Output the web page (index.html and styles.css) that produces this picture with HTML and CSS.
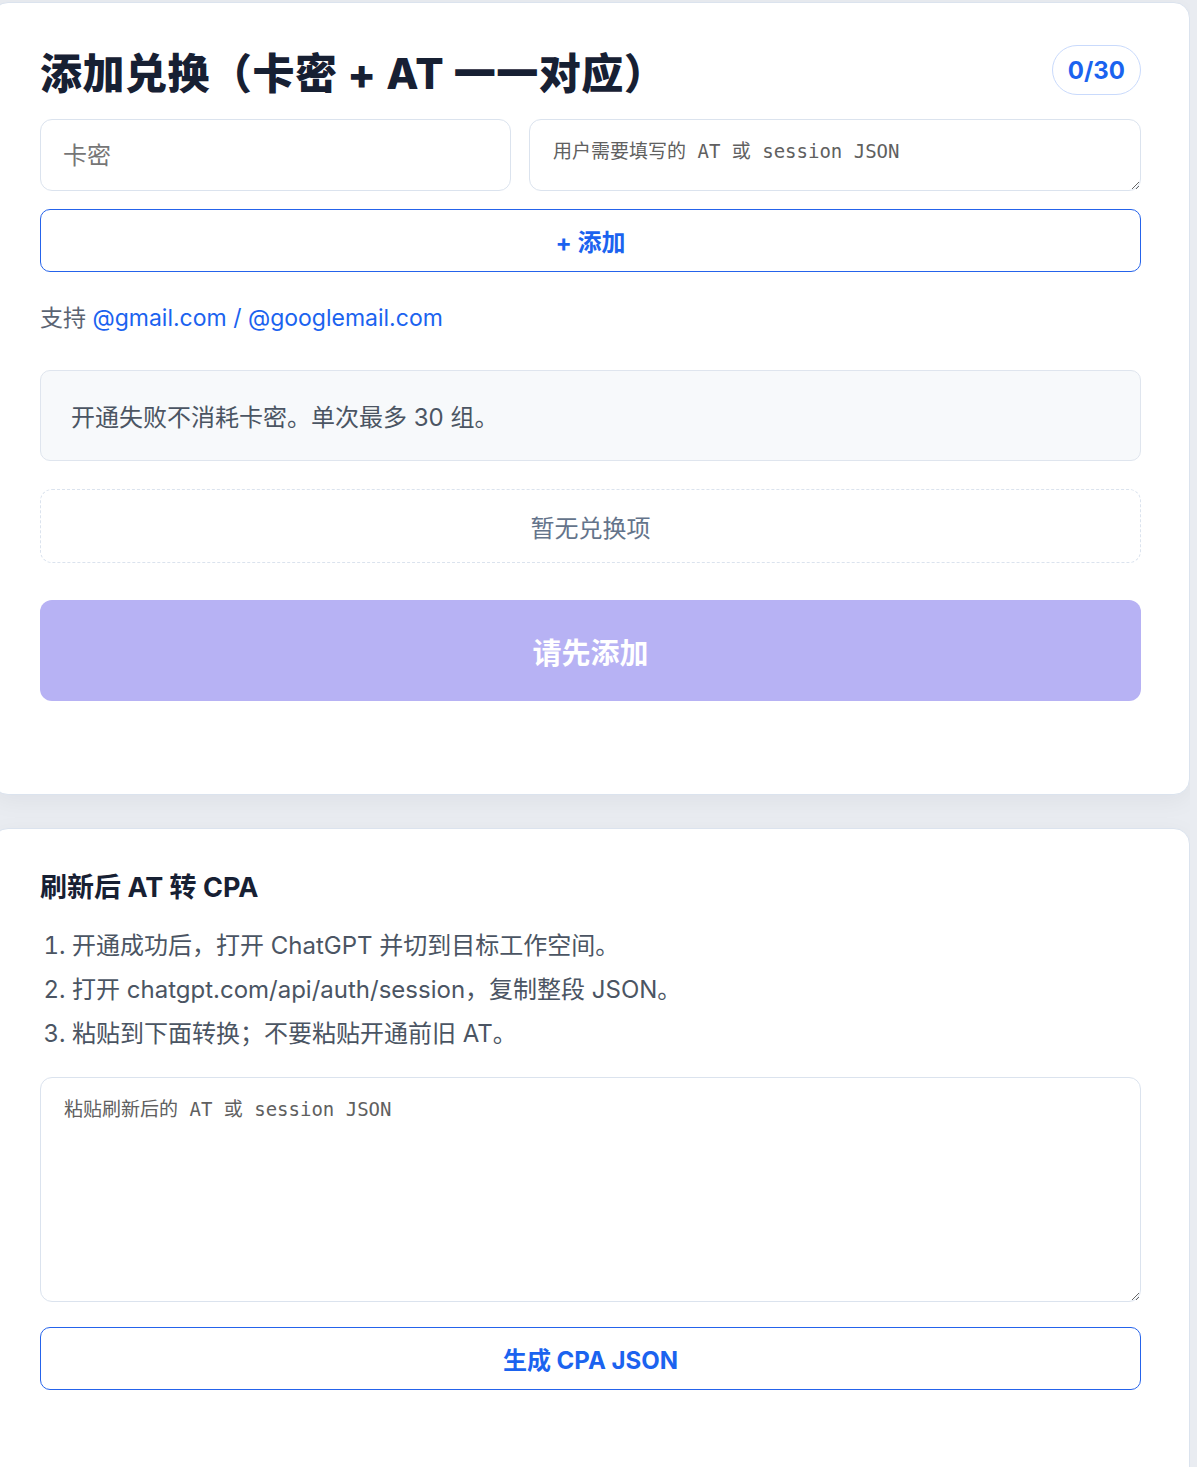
FILE: index.html
```html
<!DOCTYPE html>
<html lang="zh-CN">
<head>
    <meta charset="UTF-8">
    <title>添加兑换</title>
    <link rel="stylesheet" href="styles.css">
</head>
<body>
    <div class="page">
        <section class="card redeem-card">
            <div class="card-head">
                <h1>添加兑换（卡密 + AT 一一对应）</h1>
                <span class="count">0/30</span>
            </div>

            <div class="pair-row">
                <input class="field code-field" type="text" placeholder="卡密">
                <textarea class="field at-field" placeholder="用户需要填写的 AT 或 session JSON"></textarea>
            </div>

            <button class="btn-outline add-btn">+ 添加</button>

            <p class="support">支持 <span class="domain">@gmail.com / @googlemail.com</span></p>

            <div class="notice">开通失败不消耗卡密。单次最多 30 组。</div>

            <div class="empty">暂无兑换项</div>

            <button class="btn-submit" disabled>请先添加</button>
        </section>

        <section class="card cpa-card">
            <h3>刷新后 AT 转 CPA</h3>
            <ol class="steps">
                <li>开通成功后，打开 ChatGPT 并切到目标工作空间。</li>
                <li>打开 chatgpt.com/api/auth/session，复制整段 JSON。</li>
                <li>粘贴到下面转换；不要粘贴开通前旧 AT。</li>
            </ol>
            <textarea class="field session-field" placeholder="粘贴刷新后的 AT 或 session JSON"></textarea>
            <button class="btn-outline cpa-btn">生成 CPA JSON</button>
        </section>
    </div>
</body>
</html>
```

FILE: styles.css
```css
body {
    margin: 0;
    background-color: #e9ecf1;
    font-family: Inter, "Noto Sans CJK SC", sans-serif;
    color: #1e293b;
}
.page {
    width: 1198px;
    margin-left: -8px;
    padding-top: 2px;
    overflow: hidden;
}
.card {
    background: #fff;
    border: 1px solid #dbe3ee;
    border-radius: 16px;
    padding: 0 48px 0 47px;
    box-shadow: 0 6px 24px rgba(15, 23, 42, 0.05);
}
.redeem-card {
    padding-top: 42px;
    padding-bottom: 93px;
}
.card-head {
    display: flex;
    align-items: center;
    justify-content: space-between;
    height: 50px;
}
h1 {
    margin: 0;
    font-size: 42px;
    font-weight: 800;
    letter-spacing: 0.5px;
    color: #172033;
}
.count {
    display: flex;
    align-items: center;
    height: 48px;
    padding: 0 15px;
    border: 1px solid #c9dafc;
    border-radius: 25px;
    color: #1b63ef;
    font-size: 24px;
    font-weight: 700;
}
.pair-row {
    display: flex;
    gap: 18px;
    margin-top: 24px;
}
.field {
    box-sizing: border-box;
    border: 1px solid #dbe3ee;
    border-radius: 12px;
    background: #fff;
    outline: none;
}
.code-field {
    width: 471px;
    height: 72px;
    padding: 0 22px;
    font-family: Inter, "Noto Sans CJK SC", sans-serif;
    font-size: 24px;
}
.code-field::placeholder {
    color: #767676;
}
.at-field,
.session-field {
    font-family: "DejaVu Sans Mono", "Noto Sans CJK SC", monospace;
    font-size: 19px;
    line-height: 24px;
}
.at-field::placeholder,
.session-field::placeholder {
    color: #606060;
}
.at-field {
    flex: 1;
    height: 72px;
    padding: 19px 23px;
    resize: vertical;
}
.btn-outline {
    display: block;
    width: 100%;
    height: 63px;
    background: #fff;
    border: 1px solid #2563eb;
    border-radius: 10px;
    color: #1b63ef;
    font-family: Inter, "Noto Sans CJK SC", sans-serif;
    font-size: 24px;
    font-weight: 700;
    cursor: pointer;
}
.add-btn {
    margin-top: 18px;
}
.support {
    margin: 30px 0 0;
    font-size: 23px;
    line-height: 32px;
    color: #5b6473;
}
.domain {
    color: #1b63ef;
}
.notice {
    margin-top: 36px;
    height: 91px;
    box-sizing: border-box;
    display: flex;
    align-items: center;
    padding: 0 30px;
    background: #f7f9fb;
    border: 1px solid #dfe5ee;
    border-radius: 10px;
    font-size: 24px;
    color: #4b5563;
}
.empty {
    margin-top: 28px;
    height: 74px;
    box-sizing: border-box;
    display: flex;
    align-items: center;
    justify-content: center;
    border: 1px dashed #dbe3ee;
    border-radius: 12px;
    font-size: 24px;
    color: #64748b;
}
.btn-submit {
    display: block;
    width: 100%;
    margin-top: 37px;
    height: 101px;
    border: none;
    border-radius: 12px;
    background: #b7b2f4;
    color: #fff;
    font-family: Inter, "Noto Sans CJK SC", sans-serif;
    font-size: 29px;
    font-weight: 700;
}
.cpa-card {
    margin-top: 33px;
    padding-top: 41px;
    padding-bottom: 120px;
}
h3 {
    margin: 0;
    font-size: 27px;
    line-height: 36px;
    font-weight: 700;
    color: #172033;
}
.steps {
    margin: 18px 0 0;
    padding-left: 32px;
    font-size: 24px;
    line-height: 44px;
    color: #4b5563;
}
.session-field {
    display: block;
    width: 100%;
    height: 225px;
    margin-top: 21px;
    padding: 19px 23px;
    resize: vertical;
}
.cpa-btn {
    margin-top: 25px;
}
```
